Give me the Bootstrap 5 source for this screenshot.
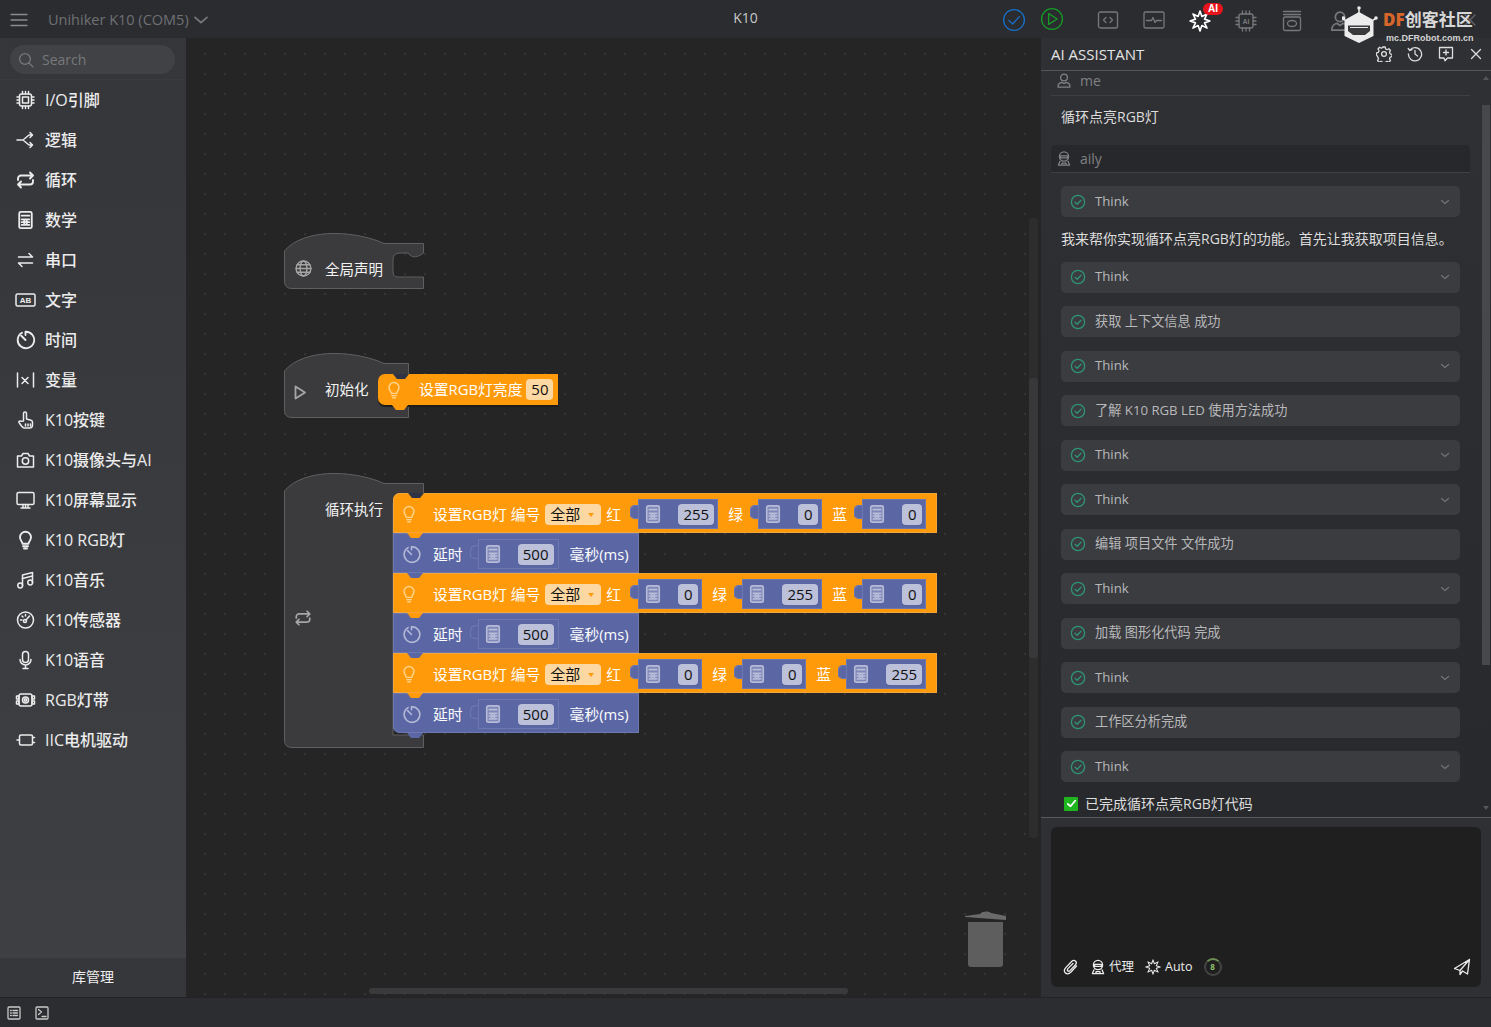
<!DOCTYPE html>
<html lang="zh-CN">
<head>
<meta charset="UTF-8">
<title>K10</title>
<link href="https://cdn.jsdelivr.net/npm/bootstrap@5.3.3/dist/css/bootstrap.min.css" rel="stylesheet">
<style>
  html, body { height: 100%; margin: 0; overflow: hidden; }
  body { background: #2c2d30; font-family: "Open Sans", "Noto Sans CJK SC", sans-serif; font-size: 14px; color: #ddd; }
  .ico { fill: none; stroke: currentColor; stroke-width: 1.3; stroke-linecap: round; stroke-linejoin: round; flex: none; }
  .app-shell { width: 1491px; height: 1027px; display: flex; flex-direction: column; position: relative; }

  /* top bar */
  .top-bar { height: 38px; flex: none; background: #2b2c30; position: relative; padding: 1px 0 0 10px; }
  .top-bar .board { color: #6f7074; font-size: 14.5px; margin-left: 20px; }
  .top-bar .proj { position: absolute; left: 0; right: 0; top: 8px; text-align: center; color: #c8c8c8; font-size: 14px; line-height: 20px; }
  .top-ico { position: absolute; color: #77787c; }
  .ai-flag { position: absolute; left: 1203px; top: 3px; background: #e8141c; color: #fff; font-size: 10px; font-weight: 700; line-height: 12px; padding: 0 5px; border-radius: 6px; font-family: "Liberation Sans", sans-serif; }
  .df-logo { position: absolute; left: 1342px; top: 6px; width: 36px; height: 38px; }
  .df-name { position: absolute; left: 1383px; top: 9px; font-size: 17px; line-height: 22px; font-weight: 700; color: #d8d8d8; white-space: nowrap; }
  .df-name b { color: #d8662a; }
  .df-site { position: absolute; left: 1386px; top: 32px; font-size: 9px; line-height: 12px; font-weight: 700; color: #d4d4d4; font-family: "Liberation Sans", sans-serif; white-space: nowrap; }

  /* side menu */
  .work-row { flex: 1; display: flex; min-height: 0; }
  .side-menu { width: 186px; flex: none; background: linear-gradient(#35363a, #3f4044); display: flex; flex-direction: column; }
  .search-wrap { height: 42px; padding: 7px 11px 0 10px; border-bottom: 1px solid #3a3b3f; flex: none; }
  .search-pill { height: 29px; border-radius: 15px; background: #414245; color: #77787b; padding-left: 8px; gap: 8px; font-size: 14px; }
  .menu-list { flex: 1; }
  .menu-item { height: 40px; display: flex; align-items: center; padding-left: 15px; gap: 9px; color: #ececec; font-size: 16px; font-weight: 500; }
  .menu-item .ico { stroke-width: 1.5; }
  .lib-btn { height: 39px; flex: none; background: #36373b; text-align: center; line-height: 38px; color: #eee; font-size: 14px; }

  /* block canvas */
  .block-canvas { width: 855px; flex: none; position: relative; overflow: hidden;
    background-color: #252525;
    background-image: radial-gradient(circle at 1px 1px, #363636 1px, transparent 1.2px);
    background-size: 20px 20px; background-position: 18px 15px; }
  .hat-node { position: absolute; left: 98px; color: #f2f2f2; font-size: 14.5px; }
  .hat-node svg.hat-shape { display: block; overflow: visible; }
  .hat-shape path { fill: #3b3b3d; stroke: #5f5f61; stroke-width: 1; }
  .hat-label { position: absolute; left: 41px; top: 27px; line-height: 20px; white-space: nowrap; }
  .hat-ico { position: absolute; color: #a6a6a6; }
  .stack-node { position: absolute; left: 207px; font-size: 14.8px; color: #fff; }
  .blk-row { height: 40px; display: flex; align-items: center; position: relative; white-space: nowrap; width: max-content; padding-top: 2px; }
  .blk-row::after { content: ""; position: absolute; left: 14px; bottom: -5px; width: 16px; height: 5px; background: inherit; clip-path: polygon(0 0, 100% 0, 75% 100%, 25% 100%); z-index: 2; }
  .blk-orange { background: #ff9a0a; padding-right: 11px; box-shadow: inset 0 0 0 1px #f2a53a; }
  .blk-blue { background: #5b67a5; padding-right: 10px; box-shadow: inset 0 0 0 1px #6d78b0; }
  .blk-top::before { content: ""; position: absolute; left: 15px; top: 0; width: 16px; height: 5px; background: #2f3345; clip-path: polygon(0 0, 100% 0, 75% 100%, 25% 100%); }
  .blk-tl { border-top-left-radius: 7px; }
  .blk-bl { border-bottom-left-radius: 7px; }
  .blk-single { height: 31px; border-radius: 7px 0 0 7px; padding-right: 5px; padding-top: 0; box-shadow: 0 2px 0 #1d1d1d; }
  .blk-ico { width: 40px; display: flex; justify-content: center; flex: none; padding-right: 8px; }
  .blk-blue .blk-ico { padding-right: 4px; }
  .blk-single .blk-ico { width: 32px; padding-right: 0; }
  .ico-orange { color: #ffd48c; }
  .ico-blue { color: #b6bbd8; }
  .init-text { margin-left: 9px; }
  .drop-field { width: 56px; height: 21px; margin-left: 5px; border-radius: 4px; background: #fdd8a2; color: #111; line-height: 21px; padding-left: 5px; position: relative; font-size: 15px; }
  .drop-field::after { content: ""; position: absolute; right: 7px; top: 9px; border: 3px solid transparent; border-top: 4px solid #ff9a0a; }
  .num-field { height: 21px; border-radius: 4px; background: #bcc0d9; color: #111; line-height: 21px; text-align: center; font-size: 15px; flex: none; }
  .fld-w { width: 36px; }
  .fld-n { width: 20px; }
  .fld-peach { width: 27px; background: #fdd8a2; margin-left: 4px; }
  .val-blk { height: 30px; background: #5b67a5; box-shadow: inset 0 0 0 1px #6d78b0; display: flex; align-items: center; position: relative; padding-right: 4px; margin-left: 8px; }
  .val-blk::before { content: ""; position: absolute; left: -8px; top: 6px; width: 8px; height: 14px; background: #5b67a5; border-radius: 5px 0 0 5px; box-shadow: inset 1px 1px 0 #6d78b0, inset 0 -1px 0 #6d78b0; }
  .val-wait { margin-left: 15px; padding-right: 5px; }
  .val-ico { width: 40px; flex: none; display: flex; padding-left: 5px; color: #b6bbd8; }
  .val-ico svg { fill: rgba(182, 187, 216, .4); }
  .lbl-c { margin-left: 10px; margin-right: 7px; width: 15px; }
  .lbl-first { margin-left: 5px; margin-right: 9px; width: 15px; }
  .unit-text { margin-left: 11px; }
  .canvas-scroll-x { position: absolute; left: 183px; top: 950px; width: 479px; height: 6px; background: #3a3a3c; border-radius: 3px; }
  .canvas-scroll-y { position: absolute; left: 843px; top: 180px; width: 9px; height: 620px; background: #2d2d2e; border-radius: 3px; }
  .canvas-scroll-y::after { content: ""; position: absolute; left: 0; top: 160px; width: 9px; height: 280px; background: #38383a; border-radius: 3px; }
  .trash-ico { position: absolute; left: 778px; top: 870px; }

  /* assistant panel */
  .ai-panel { flex: 1; min-width: 0; display: flex; flex-direction: column; background: #2f3034; }
  .ai-head { height: 33px; flex: none; padding: 0 9px 0 10px; border-bottom: 1px solid #54555a; color: #e4e4e4; font-size: 15px; }
  .head-tools { gap: 15px; color: #ddd; }
  .head-close { margin-left: 1px; }
  .chat-wrap { height: 747px; flex: none; position: relative; overflow: hidden; padding: 0 21px 0 10px; border-bottom: 1px solid #5a5b5f; background: linear-gradient(#2f3034, #28292c); }
  .chat-scroll { position: absolute; right: 1px; top: 34px; width: 8px; height: 560px; background: #47484c; }
  .chat-arrow-up, .chat-arrow-down { position: absolute; right: 2px; border: 3px solid transparent; }
  .chat-arrow-up { top: 2px; border-bottom: 4px solid #55565a; }
  .chat-arrow-down { bottom: 4px; border-top: 4px solid #55565a; }
  .chat-who { height: 25px; color: #808185; gap: 8px; padding-left: 5px; border-bottom: 1px solid #3f4044; }
  .chat-me { padding-bottom: 6px; }
  .chat-ask { height: 49px; padding-left: 10px; line-height: 42px; color: #ddd; font-size: 14px; }
  .chat-who-ai { height: 28px; background: #27282b; border-radius: 4px 4px 0 0; border-bottom: 1px solid #3f4044; margin-bottom: 13px; }
  .think-row { height: 31px; margin: 0 0 13.5px 10px; width: 399px; background: #3b3c40; border-radius: 5px; padding: 0 9px; gap: 9px; color: #b8b8ba; font-size: 13.2px; }
  .think-row .ok { color: #2f9472; }
  .think-row .chev { margin-left: auto; color: #6f7074; }
  .chat-line { margin: -4px 0 12px 10px; line-height: 23px; color: #ddd; font-size: 14px; white-space: nowrap; }
  .done-line { margin: -2px 0 0 13px; gap: 7px; color: #ddd; font-size: 14px; line-height: 20px; }
  .done-box { width: 14px; height: 14px; background: #1fb51f; border-radius: 1px; display: flex; align-items: center; justify-content: center; color: #fff; }
  .done-box svg { stroke-width: 2; }
  .input-box { margin: 9px 10px 10px; height: 160px; background: #1f1f20; border-radius: 6px; position: relative; }
  .input-tools { position: absolute; left: 12px; right: 10px; bottom: 10px; height: 20px; color: #ececec; font-size: 12.5px; }
  .tool-agent { margin-left: 11px; }
  .tool-agent-lbl { margin-left: 3px; }
  .tool-spark { margin-left: 11px; }
  .ctx-ring { width: 18px; height: 18px; border-radius: 50%; border: 2px solid #444; border-top-color: #6e8f55; color: #8fc06a; font-size: 8px; font-weight: 700; line-height: 14px; text-align: center; margin-left: 11px; }

  /* bottom bar */
  .bottom-bar { height: 30px; flex: none; background: #2c2d30; border-top: 1px solid #232326; padding-left: 7px; gap: 14px; color: #c9c9c9; }
</style>
</head>
<body>
<svg width="0" height="0" class="position-absolute">
  <symbol id="s-calc" viewBox="0 0 16 16"><rect x="3" y="1.500" width="10" height="13" rx="1.200"/><path d="M5 4.500h6M5 7.500h6M5 9.700h6M5 11.900h6M7 7.500v4.400M9 7.500v4.400"/></symbol>
  <symbol id="s-bulb" viewBox="0 0 16 16"><path d="M5.600 11c0-1.600-2-2.600-2-5.200A4.400 4.400 0 0 1 8 1.400a4.400 4.400 0 0 1 4.400 4.400c0 2.600-2 3.600-2 5.200zM6 13h4M6.800 14.800h2.400"/></symbol>
  <symbol id="s-clock" viewBox="0 0 16 16"><path d="M5.200 2.200A6.600 6.600 0 1 0 8 1.400V4M4.600 4.600 8 8"/></symbol>
  <symbol id="s-loop" viewBox="0 0 16 16"><path d="M2 8V6.800A2.400 2.400 0 0 1 4.400 4.400H14M11.600 2 14 4.400 11.600 6.800M14 8v1.200a2.400 2.400 0 0 1-2.400 2.400H2M4.400 9.200 2 11.600 4.400 14"/></symbol>
  <symbol id="s-ok" viewBox="0 0 16 16"><circle cx="8" cy="8" r="6.600"/><path d="m5 8.200 2.200 2.100L11 6.200"/></symbol>
  <symbol id="s-chev" viewBox="0 0 12 12"><path d="m2.500 4.500 3.500 3 3.500-3"/></symbol>
  <symbol id="s-spark" viewBox="0 0 20 20"><path d="M10 1 11.700 5.900 16.400 3.600 14.100 8.300 19 10 14.100 11.700 16.400 16.400 11.700 14.100 10 19 8.300 14.100 3.600 16.400 5.900 11.700 1 10 5.900 8.300 3.600 3.600 8.300 5.900z"/></symbol>
  <symbol id="s-agent" viewBox="0 0 16 16"><circle cx="8" cy="6" r="4.600"/><path d="M4.600 5.400h6.800v2H4.600zM4 10.800 2.400 14.600h11.200L12 10.800M6 14.600v-2h4v2"/></symbol>
  <symbol id="s-user" viewBox="0 0 16 16"><circle cx="8" cy="5" r="3.400"/><path d="M2 14.600c0-3 2-4.600 4-4.800l2 1.400 2-1.400c2 .2 4 1.800 4 4.800z"/></symbol>
</svg>

<div class="app-shell">
  <!-- top bar -->
  <div class="top-bar d-flex align-items-center">
    <svg class="ico" width="18" height="18" viewBox="0 0 18 18" style="color:#8a8b8e"><path d="M1 3.500h16M1 9h16M1 14.500h16"/></svg>
    <span class="board">Unihiker K10 (COM5)</span>
    <svg class="ico ms-1" width="16" height="16" viewBox="0 0 12 12" style="color:#77787c"><path d="m1.500 4 4.500 4 4.500-4"/></svg>
    <div class="proj">K10</div>
  </div>
  <svg class="ico top-ico" style="left:1002px;top:8px;color:#1670c8" width="24" height="24" viewBox="0 0 24 24"><circle cx="12" cy="12" r="10.400"/><path d="m6.800 12.400 3.800 3.600 6.800-7.400"/></svg>
  <svg class="ico top-ico" style="left:1040px;top:7px;color:#159a25" width="24" height="24" viewBox="0 0 24 24"><circle cx="12" cy="12" r="10.400"/><path d="M8.600 6.600v10.800l8.600-5.400z"/></svg>
  <svg class="ico top-ico" style="left:1097px;top:10px" width="22" height="20" viewBox="0 0 22 20"><rect x="1.500" y="2" width="19" height="16" rx="2"/><path d="M9 7.500 6.500 10 9 12.500M13 7.500l2.500 2.500-2.500 2.500"/></svg>
  <svg class="ico top-ico" style="left:1143px;top:10px" width="22" height="20" viewBox="0 0 22 20"><rect x="1" y="2" width="20" height="16" rx="1.500"/><path d="M3.500 10.500h5l1.500-3 2 5 1.500-2h5"/></svg>
  <svg class="ico top-ico" style="left:1189px;top:10px;color:#fff;stroke-width:1.500" width="22" height="22" viewBox="0 0 20 20"><use href="#s-spark"/></svg>
  <span class="ai-flag">AI</span>
  <svg class="ico top-ico" style="left:1235px;top:10px" width="22" height="22" viewBox="0 0 22 22"><rect x="4" y="4" width="14" height="14" rx="2"/><path d="M7.500 1v3M11 1v3M14.500 1v3M7.500 18v3M11 18v3M14.500 18v3M1 7.500h3M1 11h3M1 14.500h3M18 7.500h3M18 11h3M18 14.500h3"/><text x="11" y="14" text-anchor="middle" font-size="7" font-weight="700" fill="#77787c" stroke="none" font-family="Liberation Sans">AI</text></svg>
  <svg class="ico top-ico" style="left:1282px;top:10px" width="20" height="22" viewBox="0 0 20 22"><path d="M1.500 1.500h17M1.500 4.500h17"/><rect x="1.500" y="7" width="17" height="13.500" rx="1.500"/><ellipse cx="10" cy="13.500" rx="4.500" ry="3"/></svg>
  <svg class="ico top-ico" style="left:1329px;top:10px" width="22" height="22" viewBox="0 0 16 16"><use href="#s-user"/></svg>
  <svg class="ico top-ico" style="left:1463px;top:13px;color:#66676a" width="14" height="14" viewBox="0 0 14 14"><path d="m2 2 10 10M12 2 2 12"/></svg>
  <svg class="df-logo" viewBox="0 0 36 38"><path d="M17 1v6M3 14 0 12.500M31 14l4-2" stroke="#e8e8e8" stroke-width="1.500"/><circle cx="17" cy="2" r="1.800" fill="#e8e8e8"/><circle cx="34" cy="12" r="1.800" fill="#e8e8e8"/><circle cx="1.500" cy="12" r="1.800" fill="#e8e8e8"/><path d="M17 6 31.500 14v16L17 37 2.500 30V14z" fill="#ececec"/><path d="M6 19.500h22v5.500l-5 4H11l-5-4z" fill="#3a3a3c"/><path d="M8 21.500h18" stroke="#ececec" stroke-width="1"/></svg>
  <div class="df-name"><b>DF</b>创客社区</div>
  <div class="df-site">mc.DFRobot.com.cn</div>

  <div class="work-row">
    <!-- side menu -->
    <div class="side-menu">
      <div class="search-wrap">
        <div class="search-pill d-flex align-items-center">
          <svg class="ico" width="16" height="16" viewBox="0 0 16 16"><circle cx="7" cy="7" r="5.400"/><path d="m11 11 3.800 3.800"/></svg>Search
        </div>
      </div>
      <div class="menu-list">
        <div class="menu-item"><svg class="ico" width="21" height="20" viewBox="0 0 20 20"><rect x="4" y="4" width="12" height="12" rx="2"/><rect x="7" y="7" width="6" height="6"/><path d="M7 1.500V4M10 1.500V4M13 1.500V4M7 16v2.500M10 16v2.500M13 16v2.500M1.500 7H4M1.500 10H4M1.500 13H4M16 7h2.500M16 10h2.500M16 13h2.500"/></svg>I/O引脚</div>
        <div class="menu-item"><svg class="ico" width="21" height="20" viewBox="0 0 20 20"><path d="M1.500 10h6l6-5h3M7.500 10l6 5h3M14.500 2.500 17 5l-2.500 2.500M14.500 12.500 17 15l-2.500 2.500"/></svg>逻辑</div>
        <div class="menu-item"><svg class="ico" width="21" height="20" viewBox="0 0 16 16"><use href="#s-loop"/></svg>循环</div>
        <div class="menu-item"><svg class="ico" width="21" height="20" viewBox="0 0 16 16"><use href="#s-calc"/></svg>数学</div>
        <div class="menu-item"><svg class="ico" width="21" height="20" viewBox="0 0 20 20"><path d="M3 7h14M13.500 3.500 17 7M17 13H3M6.500 16.500 3 13"/></svg>串口</div>
        <div class="menu-item"><svg class="ico" width="21" height="20" viewBox="0 0 21 20"><rect x="1" y="4" width="19" height="12" rx="1.500"/><text x="10.500" y="13" text-anchor="middle" font-size="8" font-weight="700" fill="#ececec" stroke="none" font-family="Liberation Sans">AB</text></svg>文字</div>
        <div class="menu-item"><svg class="ico" width="21" height="20" viewBox="0 0 16 16"><use href="#s-clock"/></svg>时间</div>
        <div class="menu-item"><svg class="ico" width="21" height="20" viewBox="0 0 20 20"><path d="M2 3v14M18 3v14M6.500 7.500l6 6M12.500 7.500l-6 6"/></svg>变量</div>
        <div class="menu-item"><svg class="ico" width="21" height="20" viewBox="0 0 20 20"><path d="M8 11V3.500a1.500 1.500 0 0 1 3 0V9l4.500 1.200c1 .3 1.500 1 1.500 2V15c0 1.600-1 3-3 3H9c-1.500 0-2-.6-3-2l-2.500-3.500c-.6-1 .8-2.200 2-1.200z"/><path d="M10 14v2M12.500 14v2M15 14v2"/></svg>K10按键</div>
        <div class="menu-item"><svg class="ico" width="21" height="20" viewBox="0 0 20 20"><path d="M2 6h4l1.500-2.500h5L14 6h4v11H2z"/><circle cx="10" cy="11" r="3.200"/></svg>K10摄像头与AI</div>
        <div class="menu-item"><svg class="ico" width="21" height="20" viewBox="0 0 20 20"><rect x="1.500" y="2.500" width="17" height="12" rx="1.500"/><path d="M10 14.500v3.500M5.500 18h9M7.500 14.500V18M12.500 14.500V18"/></svg>K10屏幕显示</div>
        <div class="menu-item"><svg class="ico" width="21" height="20" viewBox="0 0 16 16"><use href="#s-bulb"/></svg>K10 RGB灯</div>
        <div class="menu-item"><svg class="ico" width="21" height="20" viewBox="0 0 20 20"><path d="M7 15.500V5l10-2.500v10"/><circle cx="4.700" cy="15.500" r="2.400"/><circle cx="14.700" cy="12.500" r="2.400"/><path d="M7 8.500 17 6"/></svg>K10音乐</div>
        <div class="menu-item"><svg class="ico" width="21" height="20" viewBox="0 0 20 20"><circle cx="10" cy="10" r="8"/><circle cx="9.500" cy="11" r="1.500"/><path d="m10.500 10 3.500-4M5 10h1.500M6.500 6l1 1M10 4.500V6"/></svg>K10传感器</div>
        <div class="menu-item"><svg class="ico" width="21" height="20" viewBox="0 0 20 20"><rect x="7" y="1.500" width="6" height="11" rx="3"/><path d="M4.500 9.500a5.500 5.500 0 0 0 11 0M10 15v3.500M7.500 18.500h5"/></svg>K10语音</div>
        <div class="menu-item"><svg class="ico" width="21" height="20" viewBox="0 0 20 20"><rect x="3.500" y="4" width="13" height="12" rx="2"/><circle cx="10" cy="10" r="3"/><circle cx="10" cy="10" r="1.200"/><path d="M1 6h2.500v3H1zM1 11h2.500v3H1zM16.500 6H19v3h-2.500zM16.500 11H19v3h-2.500z"/></svg>RGB灯带</div>
        <div class="menu-item"><svg class="ico" width="21" height="20" viewBox="0 0 20 20"><rect x="4" y="5" width="13" height="10" rx="1.500"/><path d="M1.500 10H4M17 7.500h2M17 12.500h2"/></svg>IIC电机驱动</div>
      </div>
      <div class="lib-btn">库管理</div>
    </div>

    <!-- block canvas -->
    <div class="block-canvas">
      <!-- 全局声明 -->
      <div class="hat-node" style="top:195px">
        <svg class="hat-shape" width="140" height="56"><path d="M.5 18C10 6 30 .5 50 .5c20 0 38 4.500 50 10H139.500V20c-5 4-11.500 6-15.500 0h-8Q109 20 109 27v12Q109 44 114 44h25.500V55.500H8Q.5 55.500 .5 48Z"/></svg>
        <svg class="ico hat-ico" style="left:11px;top:27px" width="17" height="17" viewBox="0 0 16 16"><circle cx="8" cy="8" r="7"/><ellipse cx="8" cy="8" rx="3.200" ry="7"/><path d="M1 8h14M2 4.500h12M2 11.500h12"/></svg>
        <div class="hat-label">全局声明</div>
      </div>
      <!-- 初始化 -->
      <div class="hat-node" style="top:315px">
        <svg class="hat-shape" width="125" height="65"><path d="M.5 18C10 6 30 .5 50 .5c20 0 38 4.500 50 10H124.500V30H100V52H124.500V64.500H8Q.5 64.500 .5 57Z"/></svg>
        <svg class="ico hat-ico" style="left:9px;top:32px;stroke-width:1.800" width="15" height="15" viewBox="0 0 15 15"><path d="M2.500 1.500v12l9.500-6z"/></svg>
        <div class="hat-label">初始化</div>
      </div>
      <div class="stack-node" style="left:192px;top:336px">
        <div class="blk-row blk-orange blk-single blk-top">
          <div class="blk-ico"><svg class="ico ico-orange" width="18" height="20" viewBox="0 0 16 16"><use href="#s-bulb"/></svg></div>
          <span class="init-text">设置RGB灯亮度</span>
          <span class="num-field fld-peach">50</span>
        </div>
      </div>
      <!-- 循环执行 -->
      <div class="hat-node" style="top:435px">
        <svg class="hat-shape" width="140" height="275"><path d="M.5 18C10 6 30 .5 50 .5c20 0 38 4.500 50 10H139.500V30H109V262H139.500V274.500H8Q.5 274.500 .5 267Z"/></svg>
        <svg class="ico hat-ico" style="left:10px;top:136px;stroke-width:1.500" width="18" height="18" viewBox="0 0 16 16"><use href="#s-loop"/></svg>
        <div class="hat-label">循环执行</div>
      </div>
      <div class="stack-node" style="top:455px">
        <div class="blk-row blk-orange blk-tl blk-top">
          <div class="blk-ico"><svg class="ico ico-orange" width="18" height="20" viewBox="0 0 16 16"><use href="#s-bulb"/></svg></div>
          <span>设置RGB灯 编号</span><span class="drop-field">全部</span><span class="lbl-first">红</span>
          <div class="val-blk"><span class="val-ico"><svg class="ico" width="20" height="20" viewBox="0 0 16 16"><use href="#s-calc"/></svg></span><span class="num-field fld-w">255</span></div>
          <span class="lbl-c">绿</span>
          <div class="val-blk"><span class="val-ico"><svg class="ico" width="20" height="20" viewBox="0 0 16 16"><use href="#s-calc"/></svg></span><span class="num-field fld-n">0</span></div>
          <span class="lbl-c">蓝</span>
          <div class="val-blk"><span class="val-ico"><svg class="ico" width="20" height="20" viewBox="0 0 16 16"><use href="#s-calc"/></svg></span><span class="num-field fld-n">0</span></div>
        </div>
        <div class="blk-row blk-blue">
          <div class="blk-ico"><svg class="ico ico-blue" width="19" height="19" viewBox="0 0 16 16"><use href="#s-clock"/></svg></div>
          <span>延时</span>
          <div class="val-blk val-wait"><span class="val-ico"><svg class="ico" width="20" height="20" viewBox="0 0 16 16"><use href="#s-calc"/></svg></span><span class="num-field fld-w">500</span></div>
          <span class="unit-text">毫秒(ms)</span>
        </div>
        <div class="blk-row blk-orange">
          <div class="blk-ico"><svg class="ico ico-orange" width="18" height="20" viewBox="0 0 16 16"><use href="#s-bulb"/></svg></div>
          <span>设置RGB灯 编号</span><span class="drop-field">全部</span><span class="lbl-first">红</span>
          <div class="val-blk"><span class="val-ico"><svg class="ico" width="20" height="20" viewBox="0 0 16 16"><use href="#s-calc"/></svg></span><span class="num-field fld-n">0</span></div>
          <span class="lbl-c">绿</span>
          <div class="val-blk"><span class="val-ico"><svg class="ico" width="20" height="20" viewBox="0 0 16 16"><use href="#s-calc"/></svg></span><span class="num-field fld-w">255</span></div>
          <span class="lbl-c">蓝</span>
          <div class="val-blk"><span class="val-ico"><svg class="ico" width="20" height="20" viewBox="0 0 16 16"><use href="#s-calc"/></svg></span><span class="num-field fld-n">0</span></div>
        </div>
        <div class="blk-row blk-blue">
          <div class="blk-ico"><svg class="ico ico-blue" width="19" height="19" viewBox="0 0 16 16"><use href="#s-clock"/></svg></div>
          <span>延时</span>
          <div class="val-blk val-wait"><span class="val-ico"><svg class="ico" width="20" height="20" viewBox="0 0 16 16"><use href="#s-calc"/></svg></span><span class="num-field fld-w">500</span></div>
          <span class="unit-text">毫秒(ms)</span>
        </div>
        <div class="blk-row blk-orange">
          <div class="blk-ico"><svg class="ico ico-orange" width="18" height="20" viewBox="0 0 16 16"><use href="#s-bulb"/></svg></div>
          <span>设置RGB灯 编号</span><span class="drop-field">全部</span><span class="lbl-first">红</span>
          <div class="val-blk"><span class="val-ico"><svg class="ico" width="20" height="20" viewBox="0 0 16 16"><use href="#s-calc"/></svg></span><span class="num-field fld-n">0</span></div>
          <span class="lbl-c">绿</span>
          <div class="val-blk"><span class="val-ico"><svg class="ico" width="20" height="20" viewBox="0 0 16 16"><use href="#s-calc"/></svg></span><span class="num-field fld-n">0</span></div>
          <span class="lbl-c">蓝</span>
          <div class="val-blk"><span class="val-ico"><svg class="ico" width="20" height="20" viewBox="0 0 16 16"><use href="#s-calc"/></svg></span><span class="num-field fld-w">255</span></div>
        </div>
        <div class="blk-row blk-blue blk-bl">
          <div class="blk-ico"><svg class="ico ico-blue" width="19" height="19" viewBox="0 0 16 16"><use href="#s-clock"/></svg></div>
          <span>延时</span>
          <div class="val-blk val-wait"><span class="val-ico"><svg class="ico" width="20" height="20" viewBox="0 0 16 16"><use href="#s-calc"/></svg></span><span class="num-field fld-w">500</span></div>
          <span class="unit-text">毫秒(ms)</span>
        </div>
      </div>
      <div class="canvas-scroll-y"></div>
      <div class="canvas-scroll-x"></div>
      <svg class="trash-ico" width="44" height="60" viewBox="0 0 44 60"><path d="M1 8 16 6c3-3 8-3 11-1l15 3v4L1 9z" fill="#6a6a6a"/><path d="M4 14h35v42q0 3-3 3H7q-3 0-3-3z" fill="#5e5e5e"/></svg>
    </div>

    <!-- assistant panel -->
    <div class="ai-panel">
      <div class="ai-head d-flex align-items-center justify-content-between">
        <span>AI ASSISTANT</span>
        <div class="head-tools d-flex align-items-center">
          <svg class="ico" width="16" height="16" viewBox="0 0 16 16"><circle cx="8" cy="8" r="2.400"/><path d="M6.800 1h2.400l.4 2 1.500.7 1.800-1 1.600 1.800-1 1.700.6 1.600 1.900.5v2.400l-1.900.5-.6 1.600 1 1.700-1.600 1.800-1.800-1-1.500.7-.4 2H6.800l-.4-2-1.500-.7-1.800 1-1.600-1.800 1-1.700-.6-1.600L.5 9.200V6.800l1.900-.5.6-1.600-1-1.700L3.600 1.200l1.800 1 1.500-.7z"/></svg>
          <svg class="ico" width="16" height="16" viewBox="0 0 16 16"><path d="M2.800 4.200A6.600 6.600 0 1 1 1.400 8M1.200 2.500 2.800 4.500 5 3.600M8 4.500V8l2.500 2"/></svg>
          <svg class="ico" width="16" height="16" viewBox="0 0 16 16"><path d="M1.500 1.500h13v10.500H9.500L7 14.800 6 12H1.500zM8 4v5M5.500 6.500h5"/></svg>
          <svg class="ico head-close" width="12" height="12" viewBox="0 0 12 12"><path d="m1.500 1.500 9 9M10.500 1.500l-9 9"/></svg>
        </div>
      </div>
      <div class="chat-wrap">
        <div class="chat-who chat-me d-flex align-items-center"><svg class="ico" width="16" height="17" viewBox="0 0 16 16"><use href="#s-user"/></svg>me</div>
        <div class="chat-ask">循环点亮RGB灯</div>
        <div class="chat-who chat-who-ai d-flex align-items-center"><svg class="ico" width="16" height="17" viewBox="0 0 16 16"><use href="#s-agent"/></svg>aily</div>
        <div class="think-row d-flex align-items-center"><svg class="ico ok" width="16" height="16"><use href="#s-ok"/></svg>Think<svg class="ico chev" width="12" height="12"><use href="#s-chev"/></svg></div>
        <div class="chat-line">我来帮你实现循环点亮RGB灯的功能。首先让我获取项目信息。</div>
        <div class="think-row d-flex align-items-center"><svg class="ico ok" width="16" height="16"><use href="#s-ok"/></svg>Think<svg class="ico chev" width="12" height="12"><use href="#s-chev"/></svg></div>
        <div class="think-row d-flex align-items-center"><svg class="ico ok" width="16" height="16"><use href="#s-ok"/></svg>获取 上下文信息 成功</div>
        <div class="think-row d-flex align-items-center"><svg class="ico ok" width="16" height="16"><use href="#s-ok"/></svg>Think<svg class="ico chev" width="12" height="12"><use href="#s-chev"/></svg></div>
        <div class="think-row d-flex align-items-center"><svg class="ico ok" width="16" height="16"><use href="#s-ok"/></svg>了解 K10 RGB LED 使用方法成功</div>
        <div class="think-row d-flex align-items-center"><svg class="ico ok" width="16" height="16"><use href="#s-ok"/></svg>Think<svg class="ico chev" width="12" height="12"><use href="#s-chev"/></svg></div>
        <div class="think-row d-flex align-items-center"><svg class="ico ok" width="16" height="16"><use href="#s-ok"/></svg>Think<svg class="ico chev" width="12" height="12"><use href="#s-chev"/></svg></div>
        <div class="think-row d-flex align-items-center"><svg class="ico ok" width="16" height="16"><use href="#s-ok"/></svg>编辑 项目文件 文件成功</div>
        <div class="think-row d-flex align-items-center"><svg class="ico ok" width="16" height="16"><use href="#s-ok"/></svg>Think<svg class="ico chev" width="12" height="12"><use href="#s-chev"/></svg></div>
        <div class="think-row d-flex align-items-center"><svg class="ico ok" width="16" height="16"><use href="#s-ok"/></svg>加载 图形化代码 完成</div>
        <div class="think-row d-flex align-items-center"><svg class="ico ok" width="16" height="16"><use href="#s-ok"/></svg>Think<svg class="ico chev" width="12" height="12"><use href="#s-chev"/></svg></div>
        <div class="think-row d-flex align-items-center"><svg class="ico ok" width="16" height="16"><use href="#s-ok"/></svg>工作区分析完成</div>
        <div class="think-row d-flex align-items-center"><svg class="ico ok" width="16" height="16"><use href="#s-ok"/></svg>Think<svg class="ico chev" width="12" height="12"><use href="#s-chev"/></svg></div>
        <div class="done-line d-flex align-items-center"><span class="done-box"><svg class="ico" width="11" height="11" viewBox="0 0 12 12"><path d="m2 6.500 3 2.500 5-6"/></svg></span>已完成循环点亮RGB灯代码</div>
        <div class="chat-scroll"></div>
        <div class="chat-arrow-up"></div>
        <div class="chat-arrow-down"></div>
      </div>
      <div class="input-box">
        <div class="input-tools d-flex align-items-center">
          <svg class="ico" width="16" height="16" viewBox="0 0 16 16"><path d="M13.500 7 8 13c-2 2-4.500 2-5.800.8S1 10.500 2.800 8.600L8.600 2.500c1.300-1.300 3-1.300 4-.3s.9 2.500-.3 3.800L6.900 11.600c-.7.700-1.600.8-2.200.2s-.4-1.500.2-2.200L10 4.500"/></svg>
          <svg class="ico tool-agent" width="16" height="16" viewBox="0 0 16 16"><use href="#s-agent"/></svg><span class="tool-agent-lbl">代理</span>
          <svg class="ico tool-spark" width="16" height="16" viewBox="0 0 20 20"><use href="#s-spark"/></svg><span class="ms-1">Auto</span>
          <div class="ctx-ring">8</div>
          <svg class="ico ms-auto" width="18" height="18" viewBox="0 0 18 18"><path d="M1.500 10.500 16.500 1.500 14.500 16 9.500 13 7 16.500V12.500L16.500 1.500M1.500 10.500 7 12.500"/></svg>
        </div>
      </div>
    </div>
  </div>

  <!-- bottom bar -->
  <div class="bottom-bar d-flex align-items-center">
    <svg class="ico" width="14" height="14" viewBox="0 0 14 14"><rect x="1" y="1" width="12" height="12" rx="1"/><path d="M3.500 4.500h.8M6 4.500h4.500M3.500 7h.8M6 7h4.500M3.500 9.500h.8M6 9.500h4.500"/></svg>
    <svg class="ico" width="14" height="14" viewBox="0 0 14 14"><rect x="1" y="1" width="12" height="12" rx="1"/><path d="m3.500 3.500 3 2.500-3 2.500M7 10.500h4"/></svg>
  </div>
</div>
<script src="https://cdn.jsdelivr.net/npm/bootstrap@5.3.3/dist/js/bootstrap.bundle.min.js"></script>
</body>
</html>
